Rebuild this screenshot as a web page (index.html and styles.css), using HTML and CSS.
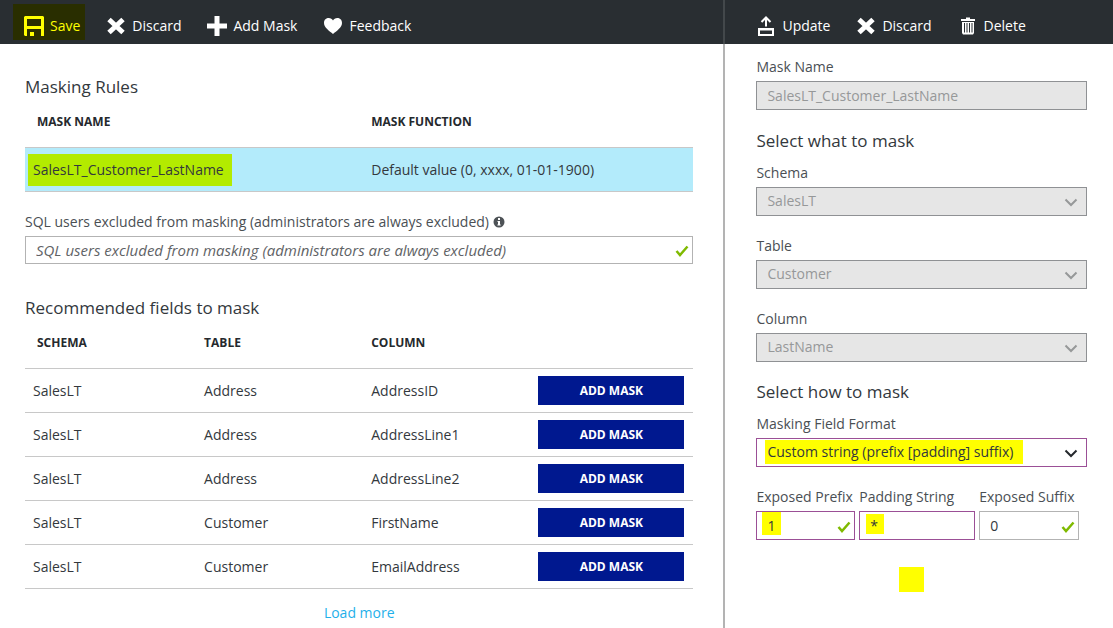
FILE: index.html
```html
<!DOCTYPE html>
<html lang="en">
<head>
<meta charset="utf-8">
<title>Dynamic data masking</title>
<link rel="stylesheet" href="styles.css">
</head>
<body>
<div class="blades">
  <main class="blade">
    <div class="toolbar">
      <button type="button" class="command command-marked">
        <svg class="icon" viewBox="0 0 20 20" aria-hidden="true"><path fill="currentColor" fill-rule="evenodd" d="M1 0H19L20 1V20H17V13H3V20H1L0 19V1ZM3 3V10H17V3Z"/><path fill="currentColor" d="M6 16h4v4H6z"/></svg>
        <span>Save</span>
      </button>
      <button type="button" class="command">
        <svg class="icon" viewBox="0 0 20 20" aria-hidden="true"><path fill="none" stroke="currentColor" stroke-width="5" d="M3 3.500 17 16.500M17 3.500 3 16.500"/></svg>
        <span>Discard</span>
      </button>
      <button type="button" class="command">
        <svg class="icon" viewBox="0 0 20 20" aria-hidden="true"><path fill="currentColor" d="M7.500 0h5v7.500H20v5h-7.500V20h-5v-7.500H0v-5h7.500z"/></svg>
        <span>Add Mask</span>
      </button>
      <button type="button" class="command">
        <svg class="icon" viewBox="0 0 20 20" aria-hidden="true"><path fill="currentColor" d="M10 4.500C11.500 1 19 .8 19 7c0 4.500-5.500 8-9 11C6.500 15 1 11.500 1 7 1 .8 8.500 1 10 4.500Z"/></svg>
        <span>Feedback</span>
      </button>
    </div>
    <div class="rules">
      <h2 class="title">Masking Rules</h2>
      <table class="grid">
        <thead><tr><th>MASK NAME</th><th>MASK FUNCTION</th></tr></thead>
        <tbody><tr class="selected"><td><span class="marked">SalesLT_Customer_LastName</span></td><td>Default value (0, xxxx, 01-01-1900)</td></tr></tbody>
      </table>

      <div class="field excluded">
        <label class="label" for="excluded">SQL users excluded from masking (administrators are always excluded)
          <svg class="info" viewBox="0 0 12 12" aria-hidden="true"><circle cx="6" cy="6" r="5.500" fill="#4d5256"/><path fill="#fff" d="M5 2h2v2H5zM4.500 5H7v3.500h.7v1H4.400v-1H5V6h-.5z"/></svg>
        </label>
        <div class="control">
          <input class="box" id="excluded" type="text" placeholder="SQL users excluded from masking (administrators are always excluded)">
          <svg class="check" viewBox="0 0 14 12" aria-hidden="true"><path fill="none" stroke="#7fba00" stroke-width="2.500" d="M1.500 6 5 10 12.500 1.500"/></svg>
        </div>
      </div>

      <h2 class="title">Recommended fields to mask</h2>
      <table class="grid">
        <thead><tr><th>SCHEMA</th><th>TABLE</th><th>COLUMN</th><th></th></tr></thead>
        <tbody>
          <tr><td>SalesLT</td><td>Address</td><td>AddressID</td><td class="action"><button type="button" class="add">ADD MASK</button></td></tr>
          <tr><td>SalesLT</td><td>Address</td><td>AddressLine1</td><td class="action"><button type="button" class="add">ADD MASK</button></td></tr>
          <tr><td>SalesLT</td><td>Address</td><td>AddressLine2</td><td class="action"><button type="button" class="add">ADD MASK</button></td></tr>
          <tr><td>SalesLT</td><td>Customer</td><td>FirstName</td><td class="action"><button type="button" class="add">ADD MASK</button></td></tr>
          <tr><td>SalesLT</td><td>Customer</td><td>EmailAddress</td><td class="action"><button type="button" class="add">ADD MASK</button></td></tr>
        </tbody>
      </table>
      <div class="more"><a href="#more">Load more</a></div>
    </div>
  </main>

  <aside class="blade blade-side">
    <div class="toolbar">
      <button type="button" class="command">
        <svg class="icon" viewBox="0 0 20 20" aria-hidden="true"><path fill="currentColor" fill-rule="evenodd" d="M2 12H18V20H2ZM4 14.500V18H16V14.500Z"/><path fill="none" stroke="currentColor" stroke-width="2" d="M10 10.500V2M5.500 6 10 1.500 14.500 6"/></svg>
        <span>Update</span>
      </button>
      <button type="button" class="command">
        <svg class="icon" viewBox="0 0 20 20" aria-hidden="true"><path fill="none" stroke="currentColor" stroke-width="5" d="M3 3.500 17 16.500M17 3.500 3 16.500"/></svg>
        <span>Discard</span>
      </button>
      <button type="button" class="command">
        <svg class="icon" viewBox="0 0 20 20" aria-hidden="true"><path fill="currentColor" d="M8 1.500h4V3h5v2H3V3h5z"/><path fill="currentColor" fill-rule="evenodd" d="M4 6H16V17L15 18.500H5L4 17ZM6 7V16.500H7V7ZM8.500 7V16.500H9.500V7ZM11 7V16.500H12V7ZM13.500 7V16.500H14.500V7Z"/></svg>
        <span>Delete</span>
      </button>
    </div>
    <form class="editor">
      <div class="field name-field">
        <label class="label" for="name">Mask Name</label>
        <input class="box" id="name" type="text" value="SalesLT_Customer_LastName" disabled>
      </div>

      <h2 class="title">Select what to mask</h2>
      <div class="stack">
        <div class="field">
          <label class="label" for="schema">Schema</label>
          <div class="control">
            <select class="box" id="schema" disabled><option>SalesLT</option></select>
            <svg class="chevron" viewBox="0 0 14 10" aria-hidden="true"><path d="M1.500 1.500 7 7 12.500 1.500"/></svg>
          </div>
        </div>
        <div class="field">
          <label class="label" for="table">Table</label>
          <div class="control">
            <select class="box" id="table" disabled><option>Customer</option></select>
            <svg class="chevron" viewBox="0 0 14 10" aria-hidden="true"><path d="M1.500 1.500 7 7 12.500 1.500"/></svg>
          </div>
        </div>
        <div class="field">
          <label class="label" for="column">Column</label>
          <div class="control">
            <select class="box" id="column" disabled><option>LastName</option></select>
            <svg class="chevron" viewBox="0 0 14 10" aria-hidden="true"><path d="M1.500 1.500 7 7 12.500 1.500"/></svg>
          </div>
        </div>
      </div>

      <h2 class="title">Select how to mask</h2>
      <div class="stack">
        <div class="field">
          <label class="label" for="format">Masking Field Format</label>
          <div class="control">
            <select class="box edited marked-format" id="format"><option>Custom string (prefix [padding] suffix)</option></select>
            <svg class="chevron" viewBox="0 0 14 10" aria-hidden="true"><path d="M1.500 1.500 7 7 12.500 1.500"/></svg>
          </div>
        </div>
        <div class="parts">
          <div class="field">
            <label class="label" for="prefix">Exposed Prefix</label>
            <div class="control">
              <input class="box edited marked-prefix" id="prefix" type="text" value="1">
              <svg class="check" viewBox="0 0 14 12" aria-hidden="true"><path fill="none" stroke="#7fba00" stroke-width="2.500" d="M1.500 6 5 10 12.500 1.500"/></svg>
            </div>
          </div>
          <div class="field">
            <label class="label" for="padding">Padding String</label>
            <input class="box edited marked-padding" id="padding" type="text" value="*">
          </div>
          <div class="field">
            <label class="label" for="suffix">Exposed Suffix</label>
            <div class="control">
              <input class="box" id="suffix" type="text" value="0">
              <svg class="check" viewBox="0 0 14 12" aria-hidden="true"><path fill="none" stroke="#7fba00" stroke-width="2.500" d="M1.500 6 5 10 12.500 1.500"/></svg>
            </div>
          </div>
        </div>
      </div>
      <div class="marker"></div>
    </form>
  </aside>
</div>
</body>
</html>
```

FILE: styles.css
```css
* { box-sizing: border-box; }

body {
  margin: 0;
  background: #fff;
  color: #33383d;
  font: 14px/20px "Open Sans", "Noto Sans", sans-serif;
}

button, input, select { font: inherit; }

.blades {
  display: grid;
  grid-template-columns: 65fr 35fr;
  min-height: 100vh;
}

.blade { min-width: 0; }
.blade-side { border-left: 2px solid #b3b3b3; }

/* Command bar */
.toolbar {
  display: flex;
  gap: 10px;
  height: 44px;
  padding: 4px 0 4px 13px;
  background: #292e32;
}

.blade-side .toolbar {
  margin-left: -2px;
  padding-left: 20px;
  border-left: 2px solid #43484b;
}

.command {
  display: flex;
  align-items: center;
  gap: 6px;
  padding: 7px 5px 0 11px;
  border: 0;
  background: none;
  color: #fff;
  white-space: nowrap;
}

.command-marked { background: #292e00; color: #ff0; }
.icon { flex: none; width: 20px; height: 20px; }

/* Text */
.title {
  margin: 0;
  font-size: 17px;
  font-weight: 400;
  line-height: 24px;
}

.label { display: block; color: #4a4f54; white-space: nowrap; }

/* Rules pane */
.rules { padding: 31px 30px 5px 25px; }

.grid {
  width: 100%;
  table-layout: fixed;
  border-spacing: 0;
}

.grid th {
  padding: 13px 12px 15px;
  border-bottom: 1px solid #c8c8c8;
  color: #25292d;
  font-size: 12px;
  font-weight: 700;
  text-align: left;
}

.grid td {
  height: 44px;
  padding: 0 0 0 12px;
  border-bottom: 1px solid #c8c8c8;
}

.grid td:first-child { padding-left: 8px; }
.grid td.action { padding-right: 9px; }
.selected td { background: #b3ebfb; }

.marked {
  display: inline-block;
  margin-left: -5px;
  padding: 6px 8px 6px 5px;
  background: #b3eb00;
}

.add {
  display: block;
  width: 100%;
  height: 29px;
  padding: 1px 0 0;
  border: 0;
  background: #00188f;
  color: #fff;
  font-size: 12px;
  font-weight: 700;
}

.info { width: 12px; height: 12px; vertical-align: -1px; }
.more { margin-top: 14px; text-align: center; }
.more a { color: #1fb0ea; text-decoration: none; }

/* Form controls */
.control { position: relative; }

.box {
  display: block;
  width: 100%;
  height: 29px;
  margin: 4px 0 0;
  padding: 0 10px 1px;
  border: 1px solid #b3b3b3;
  border-radius: 0;
  outline: 0;
  background-color: #fff;
  background-repeat: no-repeat;
  color: #33383d;
  appearance: none;
}

.box:disabled {
  border-color: #8f9194;
  background-color: #e6e6e6;
  color: #969899;
  opacity: 1;
}

.box::placeholder { color: #5f6366; font-style: italic; opacity: 1; }
.edited { border-color: #9b4f96; }

.excluded { margin: 20px 0 32px; }
.excluded .box { height: 28px; font-size: 15px; }

.check {
  position: absolute;
  right: 4px;
  bottom: 7px;
  width: 14px;
  height: 12px;
}

.chevron {
  position: absolute;
  right: 9px;
  bottom: 8px;
  width: 14px;
  height: 10px;
  fill: none;
  stroke: #25292d;
  stroke-width: 2px;
  pointer-events: none;
}

.box:disabled + .chevron { stroke: #969899; }

/* Editor pane */
.editor { padding: 13px 26px 0 31px; }
.editor .title { margin: 18px 0 10px; }
.name-field { margin-bottom: 19px; }
.stack { display: grid; gap: 20px; }

.parts {
  display: grid;
  grid-template-columns: 99fr 116fr 100fr;
  gap: 4px;
  margin-right: 8px;
}

.marked-format {
  background-image: linear-gradient(#ff0, #ff0);
  background-position: 8px 1px;
  background-size: 258px 24px;
}

.marked-prefix {
  background-image: linear-gradient(#ff0, #ff0);
  background-position: 5px 0;
  background-size: 19px 23px;
}

.marked-padding {
  background-image: linear-gradient(#ff0, #ff0);
  background-position: 6px 2px;
  background-size: 18px 20px;
}

.marker {
  width: 25px;
  height: 25px;
  margin: 27px 0 0 43%;
  background: #ff0;
}
```
